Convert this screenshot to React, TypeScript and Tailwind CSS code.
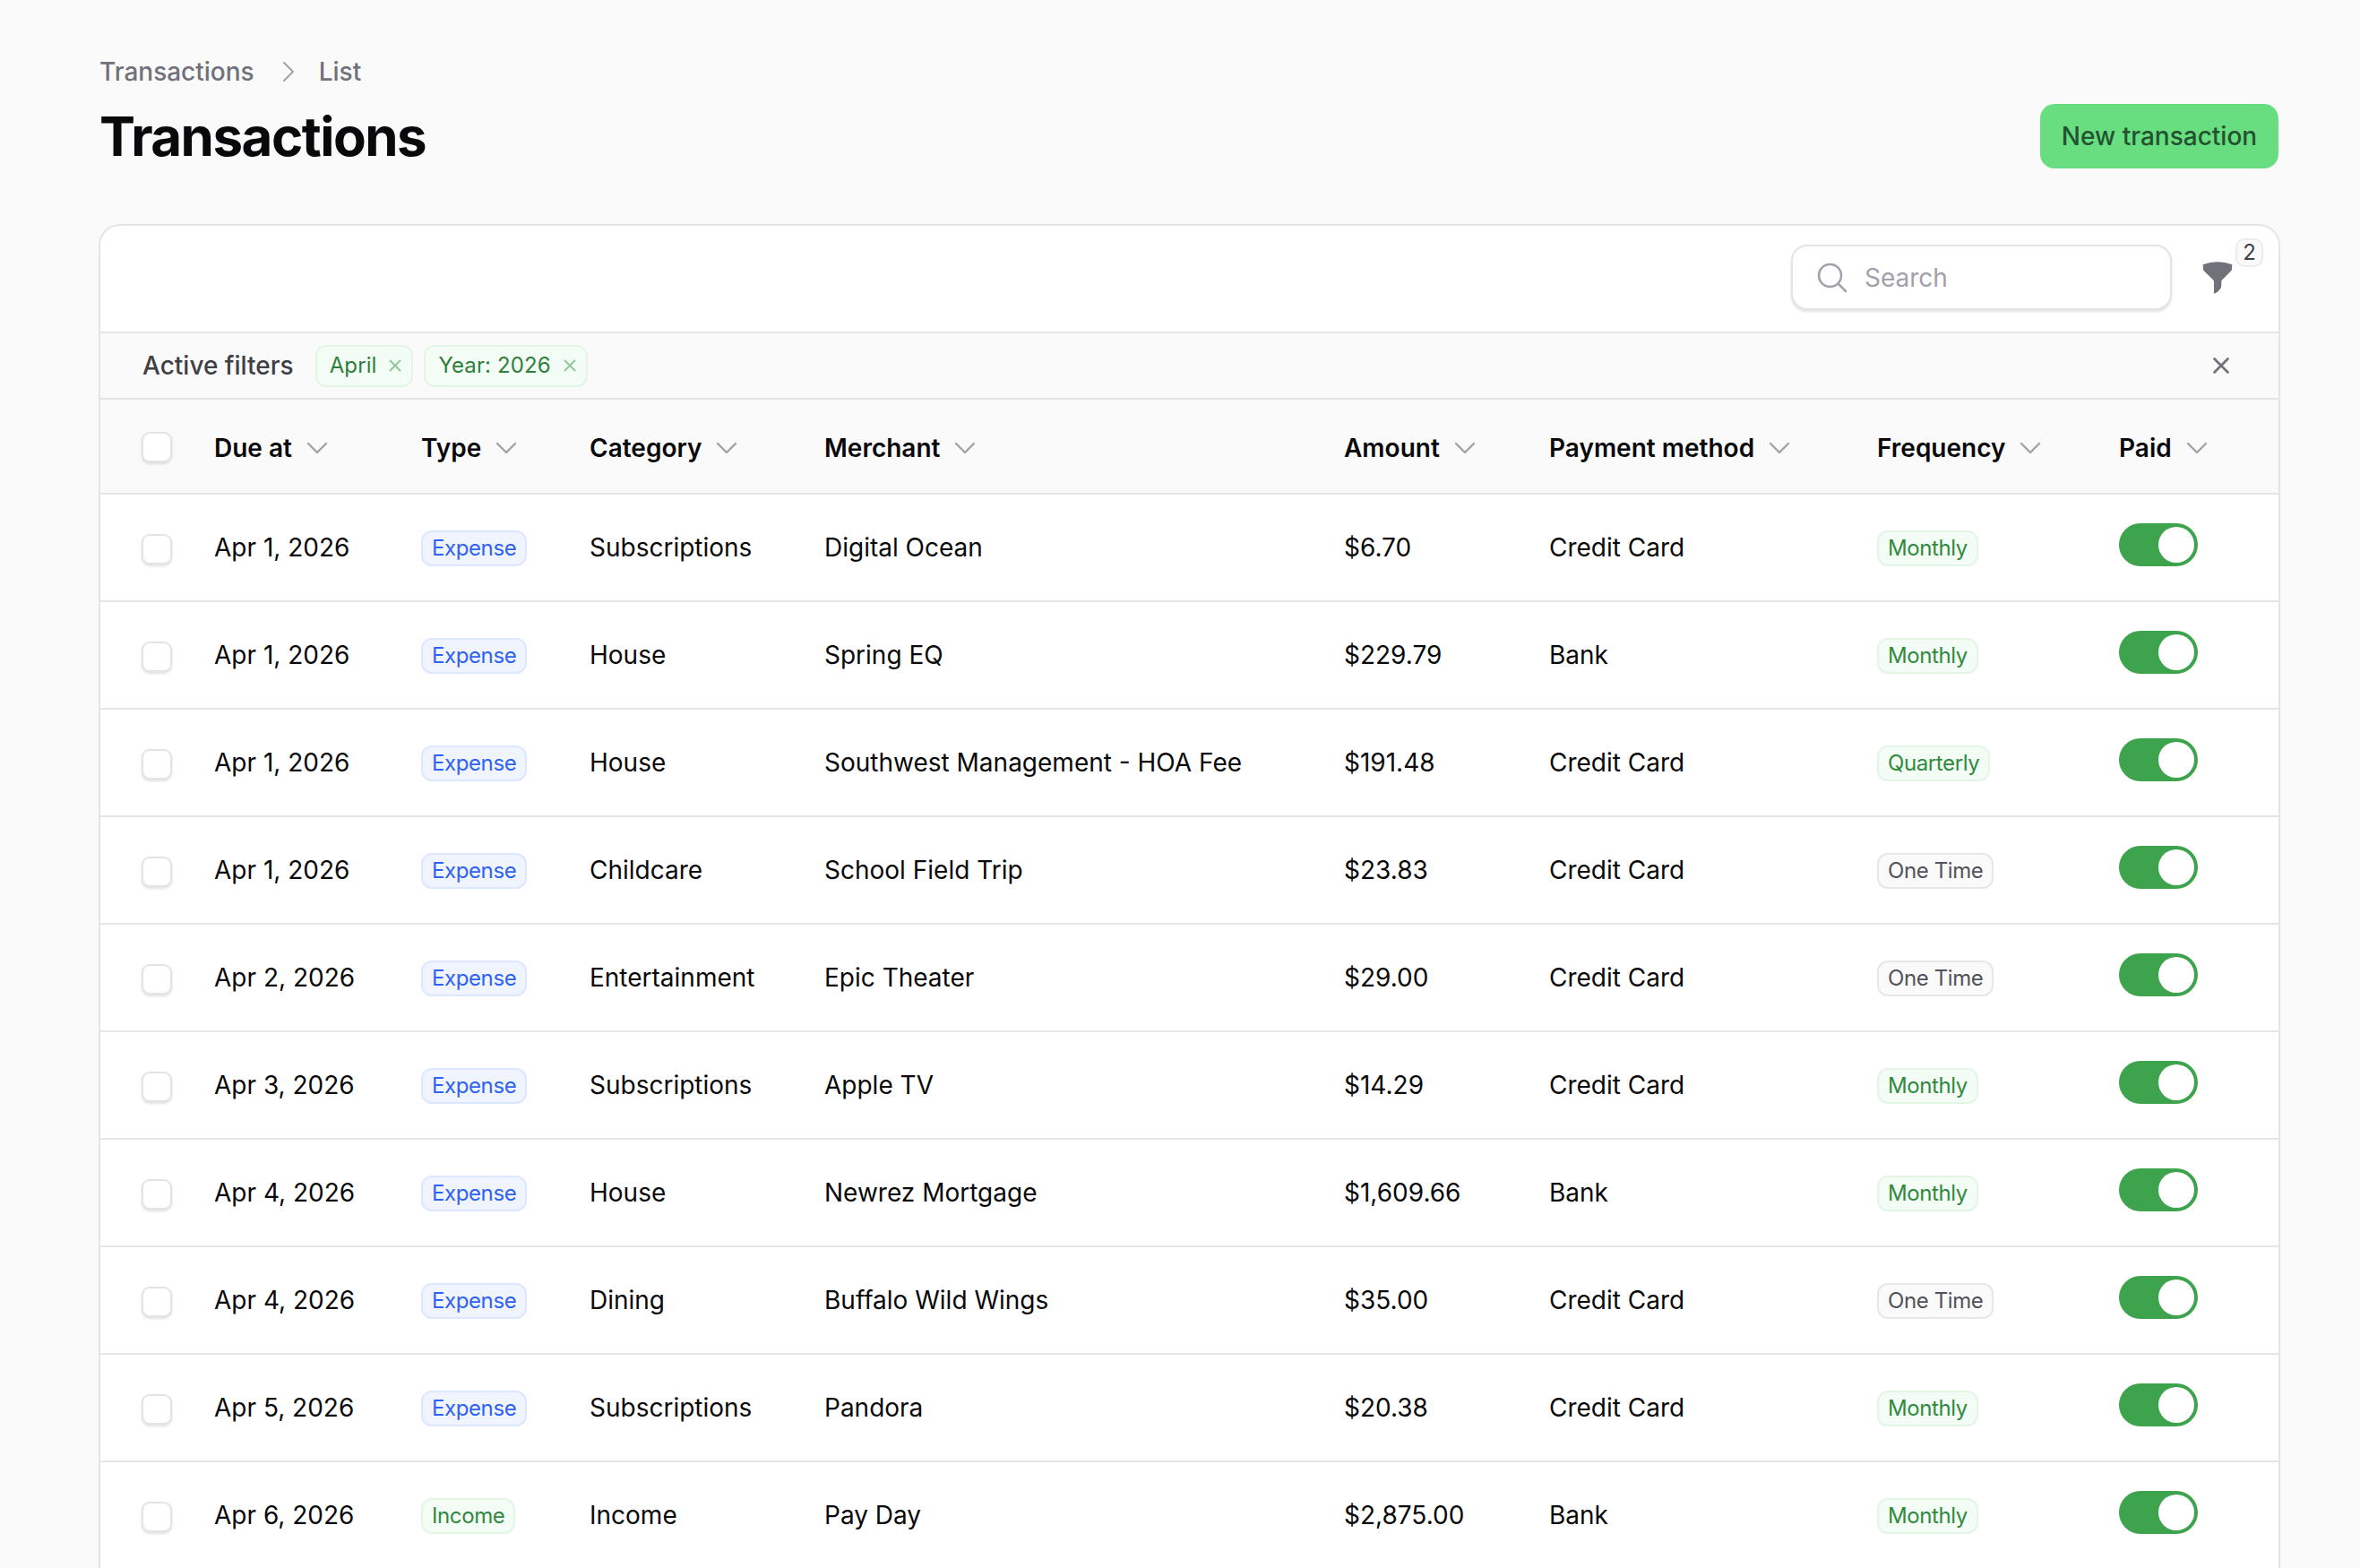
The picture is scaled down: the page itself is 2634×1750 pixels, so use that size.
const columns = [
  { label: 'Due at', width: 'w-[231px]' },
  { label: 'Type', width: 'w-[188px]' },
  { label: 'Category', width: 'w-[262px]' },
  { label: 'Merchant', width: 'w-[580px]' },
  { label: 'Amount', width: 'w-[229px]' },
  { label: 'Payment method', width: 'w-[366px]' },
  { label: 'Frequency', width: 'w-[270px]' },
  { label: 'Paid', width: 'w-[178px]' },
];

const rows = [
  { due: 'Apr 1, 2026', type: 'Expense', category: 'Subscriptions', merchant: 'Digital Ocean', amount: '$6.70', method: 'Credit Card', frequency: 'Monthly' },
  { due: 'Apr 1, 2026', type: 'Expense', category: 'House', merchant: 'Spring EQ', amount: '$229.79', method: 'Bank', frequency: 'Monthly' },
  { due: 'Apr 1, 2026', type: 'Expense', category: 'House', merchant: 'Southwest Management - HOA Fee', amount: '$191.48', method: 'Credit Card', frequency: 'Quarterly' },
  { due: 'Apr 1, 2026', type: 'Expense', category: 'Childcare', merchant: 'School Field Trip', amount: '$23.83', method: 'Credit Card', frequency: 'One Time' },
  { due: 'Apr 2, 2026', type: 'Expense', category: 'Entertainment', merchant: 'Epic Theater', amount: '$29.00', method: 'Credit Card', frequency: 'One Time' },
  { due: 'Apr 3, 2026', type: 'Expense', category: 'Subscriptions', merchant: 'Apple TV', amount: '$14.29', method: 'Credit Card', frequency: 'Monthly' },
  { due: 'Apr 4, 2026', type: 'Expense', category: 'House', merchant: 'Newrez Mortgage', amount: '$1,609.66', method: 'Bank', frequency: 'Monthly' },
  { due: 'Apr 4, 2026', type: 'Expense', category: 'Dining', merchant: 'Buffalo Wild Wings', amount: '$35.00', method: 'Credit Card', frequency: 'One Time' },
  { due: 'Apr 5, 2026', type: 'Expense', category: 'Subscriptions', merchant: 'Pandora', amount: '$20.38', method: 'Credit Card', frequency: 'Monthly' },
  { due: 'Apr 6, 2026', type: 'Income', category: 'Income', merchant: 'Pay Day', amount: '$2,875.00', method: 'Bank', frequency: 'Monthly' },
];

const badgeTones = {
  green: 'border-[#e3f6e6] bg-[#f3fcf5] text-[#2f8a3e]',
  blue: 'border-[#dde7fd] bg-[#eff4ff] text-[#2f62f0]',
  gray: 'border-[#e7e7e9] bg-[#fafafa] text-[#52525b]',
};

function Badge({ label, tone }: { label: string; tone: keyof typeof badgeTones }) {
  return (
    <span className={`mt-[2px] flex h-[40px] w-fit items-center rounded-[12px] border-2 px-[10px] text-[24px] font-normal tracking-[-0.4px] ${badgeTones[tone]}`}>
      {label}
    </span>
  );
}

function Chevron() {
  return (
    <svg viewBox="0 0 24 24" fill="none" stroke="currentColor" strokeWidth={1.8} strokeLinecap="round" strokeLinejoin="round" className="h-[32px] w-[32px] text-[#a1a1aa]">
      <path d="m19.5 8.25-7.5 7.5-7.5-7.5" />
    </svg>
  );
}

function Cross({ className }: { className: string }) {
  return (
    <svg viewBox="0 0 24 24" fill="none" stroke="currentColor" strokeWidth={2.2} strokeLinecap="round" strokeLinejoin="round" className={className}>
      <path d="M6 18 18 6M6 6l12 12" />
    </svg>
  );
}

function FilterChip({ label }: { label: string }) {
  return (
    <span className="flex h-[47px] items-center gap-[10px] rounded-[12px] border-2 border-[#e3f6e6] bg-[#f3fcf5] pl-[14px] pr-[7px] text-[24px] tracking-[0.1px] text-[#2f7f3c]">
      {label}
      <Cross className="h-[22px] w-[22px] text-[#8fc99a]" />
    </span>
  );
}

function Checkbox() {
  return (
    <input
      type="checkbox"
      className="block h-[34px] w-[34px] appearance-none rounded-[9px] border-2 border-[#e4e4e7] bg-white shadow-[0_2px_3px_rgba(0,0,0,0.12)]"
    />
  );
}

function Toggle() {
  return (
    <button className="mb-[6px] flex h-[48px] w-[88px] items-center justify-end rounded-full bg-[#3ea34d] pr-[4px]">
      <span className="h-[40px] w-[40px] rounded-full bg-white" />
    </button>
  );
}

export default function App() {
  return (
    <div className="h-[1750px] overflow-hidden bg-[#fafafa] pl-[110px] pr-[89px] pt-[60px] font-[Inter,sans-serif] text-[#09090b]">
      <nav className="flex h-[40px] items-center text-[28px] font-medium text-[#71717a]">
        <span className="pl-[1px]">Transactions</span>
        <svg viewBox="0 0 24 24" fill="none" stroke="currentColor" strokeWidth={1.5} strokeLinecap="round" strokeLinejoin="round" className="ml-[22px] mr-[18px] h-[32px] w-[32px] text-[#a1a1aa]">
          <path d="m8.25 4.5 7.5 7.5-7.5 7.5" />
        </svg>
        <span>List</span>
      </nav>

      <div className="mt-[16px] flex items-start justify-between">
        <h1 className="pl-[1px] text-[60px] font-bold leading-[72px] tracking-[-1.5px]">Transactions</h1>
        <button className="mr-[2px] h-[72px] w-[266px] rounded-[16px] bg-[#68de80] text-[28px] font-medium text-[#235230]">
          New transaction
        </button>
      </div>

      <div className="mt-[62px] rounded-t-[24px] border-2 border-b-0 border-[#e5e5e7] bg-white">
        <div className="relative flex h-[118px] items-center justify-end">
          <label className="mb-[3px] mr-[119px] flex h-[73px] w-[425px] items-center rounded-[18px] border-2 border-[#e4e4e7] bg-white pl-[24px] shadow-[0_2px_3px_rgba(0,0,0,0.12)]">
            <svg viewBox="0 0 24 24" fill="none" stroke="currentColor" strokeWidth={1.5} strokeLinecap="round" strokeLinejoin="round" className="h-[40px] w-[40px] shrink-0 text-[#a1a1aa]">
              <path d="m21 21-5.197-5.197m0 0A7.5 7.5 0 1 0 5.196 5.196a7.5 7.5 0 0 0 10.607 10.607Z" />
            </svg>
            <input placeholder="Search" className="ml-[16px] w-full bg-transparent text-[28px] outline-none placeholder:text-[#a1a1aa]" />
          </label>
          <svg viewBox="0 0 36 38" fill="currentColor" className="absolute right-[50px] top-[39px] h-[38px] w-[36px] text-[#71717a]">
            <path d="M1.7 4.3Q18 -2 34.3 4.3L34 9.5Q33.9 10.6 33 11.5L23 21.5Q22.3 22.3 22.3 23.5V27.3Q22.3 33 14.8 36.6Q14 37 14 36V23.5Q14 22.3 13.2 21.5L3 11.5Q2.1 10.6 2 9.5Z" />
          </svg>
          <span className="absolute right-[17px] top-[14px] flex h-[32px] w-[31px] items-center justify-center rounded-[10px] border-2 border-[#ececee] bg-[#fafafa] text-[24px] text-[#3f3f46]">
            2
          </span>
        </div>

        <div className="flex h-[76px] items-center border-y-2 border-[#e5e5e7] bg-[#fafafa] pl-[47px] pr-[49px]">
          <span className="text-[28px] font-medium text-[#3f3f46]">Active filters</span>
          <div className="ml-[24px] flex gap-[12px]">
            <FilterChip label="April" />
            <FilterChip label="Year: 2026" />
          </div>
          <Cross className="ml-auto h-[30px] w-[30px] text-[#71717a]" />
        </div>

        <table className="w-full table-fixed border-separate border-spacing-0 text-left text-[28px]">
          <thead>
            <tr className="bg-[#fafafa]">
              <th className="h-[106px] w-[127px] border-b-2 border-[#e5e5e7] pl-[46px] pt-[2px]">
                <Checkbox />
              </th>
              {columns.map((col) => (
                <th key={col.label} className={`border-b-2 border-[#e5e5e7] pt-[3px] font-semibold ${col.width}`}>
                  <span className="flex items-center gap-[12px]">
                    {col.label}
                    <Chevron />
                  </span>
                </th>
              ))}
            </tr>
          </thead>
          <tbody>
            {rows.map((row, i) => (
              <tr key={i}>
                <td className="h-[120px] border-b-2 border-[#e5e5e7] pl-[46px] pt-[3px]">
                  <Checkbox />
                </td>
                <td className="border-b-2 border-[#e5e5e7]">{row.due}</td>
                <td className="border-b-2 border-[#e5e5e7]">
                  <Badge label={row.type} tone={row.type === 'Income' ? 'green' : 'blue'} />
                </td>
                <td className="border-b-2 border-[#e5e5e7]">{row.category}</td>
                <td className="border-b-2 border-[#e5e5e7]">{row.merchant}</td>
                <td className="border-b-2 border-[#e5e5e7]">{row.amount}</td>
                <td className="border-b-2 border-[#e5e5e7]">{row.method}</td>
                <td className="border-b-2 border-[#e5e5e7]">
                  <Badge label={row.frequency} tone={row.frequency === 'One Time' ? 'gray' : 'green'} />
                </td>
                <td className="border-b-2 border-[#e5e5e7]">
                  <Toggle />
                </td>
              </tr>
            ))}
          </tbody>
        </table>
      </div>
    </div>
  );
}
